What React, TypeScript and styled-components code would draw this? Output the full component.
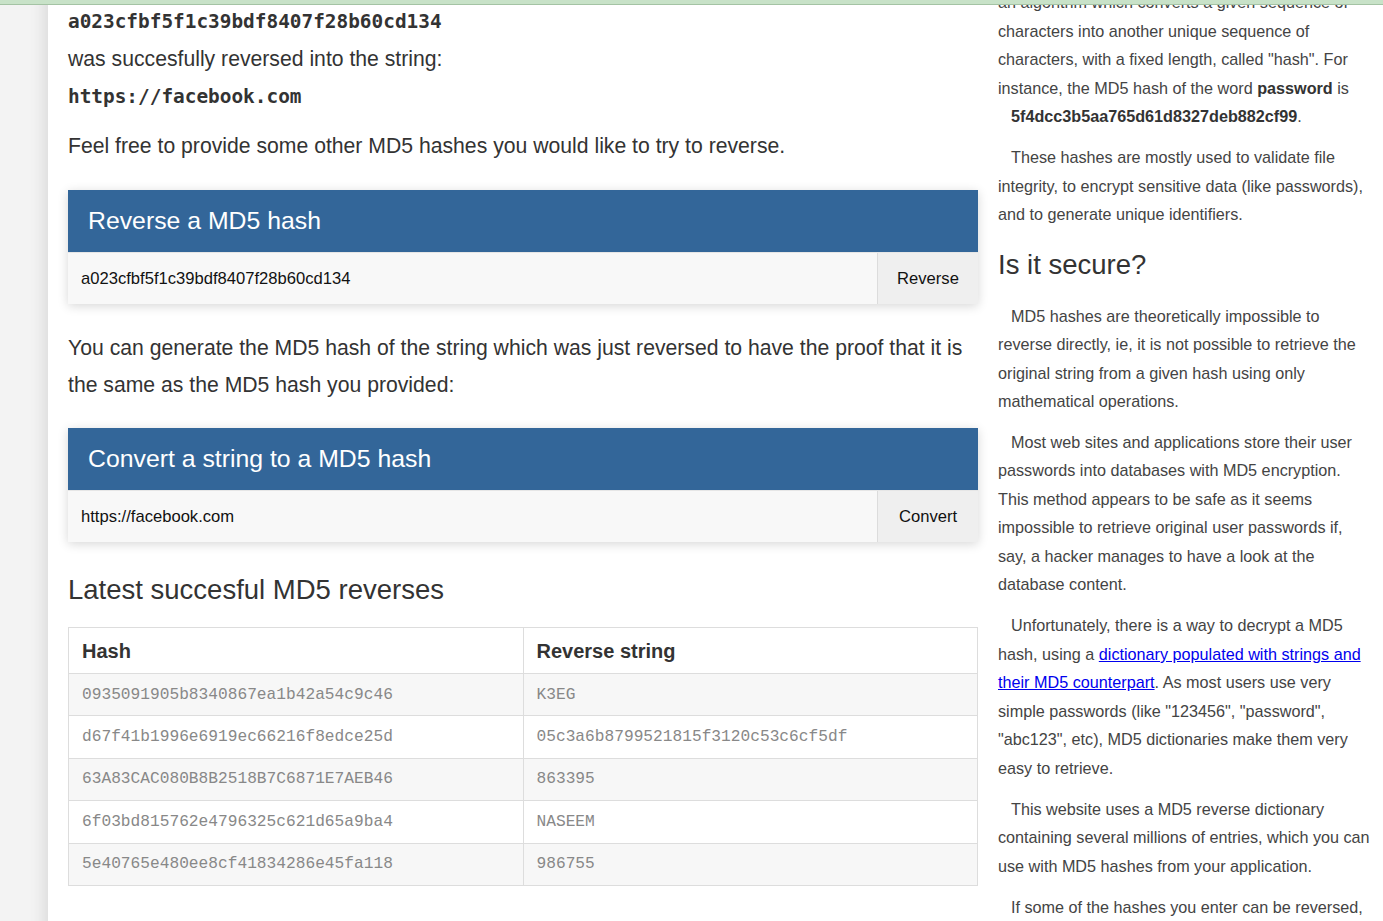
import React from "react";
import styled, { createGlobalStyle } from "styled-components";

const GlobalStyle = createGlobalStyle`
  html, body {
    margin: 0;
    padding: 0;
    background: #f3f3f3;
    overflow-x: hidden;
  }
  body {
    font-family: "Liberation Sans", Arial, sans-serif;
    color: #333;
  }
  * { box-sizing: border-box; }
`;

const TopBar = styled.div`
  position: fixed;
  top: 0;
  left: 0;
  right: 0;
  height: 5px;
  background: #c8e2c8;
  border-bottom: 1px solid #a4c3a4;
  z-index: 10;
`;

const Page = styled.div`
  display: flex;
  margin-top: -40.3px;
  min-height: calc(100vh + 40.3px);
`;

const Gutter = styled.div`
  width: 48px;
  flex: none;
  background: #f3f3f3;
`;

const Main = styled.main`
  flex: 1;
  background: #fff;
  box-shadow: -4px 0 14px rgba(0, 0, 0, 0.1);
  padding: 0 10px 40px 20px;
`;

const Columns = styled.div`
  display: grid;
  grid-template-columns: 910px 1fr;
  column-gap: 20px;
  align-items: start;
`;

const LeftCol = styled.div`
  padding-top: 5.05px;
  display: flex;
  flex-direction: column;
`;

const Lead = styled.p<{ $mt?: number; $lh?: number }>`
  margin: ${(p) => p.$mt ?? 0}px 0 0;
  font-size: 21.2px;
  line-height: ${(p) => p.$lh ?? 37.5}px;
  color: #333;
`;

const HashCode = styled.code`
  font-family: "DejaVu Sans Mono", "Liberation Mono", monospace;
  font-weight: bold;
  font-size: 19.4px;
  line-height: 1;
  color: #333;
`;

const Panel = styled.section<{ $mt: number }>`
  margin-top: ${(p) => p.$mt}px;
  background: #fff;
  box-shadow: 0 2px 10px rgba(0, 0, 0, 0.16);
`;

const PanelHead = styled.h2`
  margin: 0;
  height: 62px;
  display: flex;
  align-items: center;
  padding-left: 20px;
  background: #336699;
  color: #fff;
  font-weight: normal;
  font-size: 24.8px;
`;

const InputRow = styled.div`
  display: flex;
  height: 52px;
  border-top: 1px solid #e6e6e6;
  background: #f8f8f8;
`;

const Field = styled.div`
  flex: 1;
  display: flex;
  align-items: center;
  padding-left: 13px;
  font-size: 16.6px;
  color: #111;
`;

const Btn = styled.button`
  width: 101px;
  border: 0;
  border-left: 1px solid #dcdcdc;
  background: #efefef;
  font-family: "Liberation Sans", Arial, sans-serif;
  font-size: 16.6px;
  color: #111;
  padding: 0;
  cursor: pointer;
`;

const SectionTitle = styled.h3`
  margin: 31.5px 0 0;
  font-weight: normal;
  font-size: 27.5px;
  line-height: 31px;
  color: #333;
`;

const Table = styled.table`
  margin-top: 22.5px;
  width: 100%;
  border-collapse: collapse;
  table-layout: fixed;
  border: 1px solid #dddddd;
`;

const Th = styled.th`
  height: 46px;
  text-align: left;
  padding: 2px 13px 0;
  font-size: 20px;
  font-weight: bold;
  color: #333;
  border: 1px solid #dddddd;
  background: #fff;
`;

const Tr = styled.tr<{ $striped: boolean }>`
  background: ${(p) => (p.$striped ? "#f7f7f7" : "#fff")};
`;

const Td = styled.td`
  height: 42.4px;
  padding: 0 13px;
  font-family: "Liberation Mono", "Courier New", monospace;
  font-size: 16.2px;
  color: #888;
  border: 1px solid #dddddd;
  white-space: nowrap;
`;

const RightCol = styled.aside`
  display: flex;
  flex-direction: column;
`;

const Para = styled.p<{ $mt?: number }>`
  margin: ${(p) => p.$mt ?? 12.4}px 0 0;
  font-size: 16.2px;
  line-height: 28.5px;
  color: #444;
  text-indent: 13px;
`;

const BoldHash = styled.strong`
  display: inline-block;
  margin-left: 13px;
  text-indent: 0;
  color: #333;
`;

const Strong = styled.strong`
  color: #333;
`;

const SideTitle = styled.h3`
  margin: 20px 0 0;
  font-weight: normal;
  font-size: 27.5px;
  line-height: 31px;
  color: #333;
`;

const Link = styled.a`
  color: #0000ee;
  text-decoration: underline;
`;

const rows: [string, string][] = [
  ["0935091905b8340867ea1b42a54c9c46", "K3EG"],
  ["d67f41b1996e6919ec66216f8edce25d", "05c3a6b8799521815f3120c53c6cf5df"],
  ["63A83CAC080B8B2518B7C6871E7AEB46", "863395"],
  ["6f03bd815762e4796325c621d65a9ba4", "NASEEM"],
  ["5e40765e480ee8cf41834286e45fa118", "986755"],
];

export default function App() {
  return (
    <>
      <GlobalStyle />
      <TopBar />
      <Page>
        <Gutter />
        <Main>
          <Columns>
            <LeftCol>
              <Lead>
                The MD5 hash:
                <br />
                <HashCode>a023cfbf5f1c39bdf8407f28b60cd134</HashCode>
                <br />
                was succesfully reversed into the string:
                <br />
                <HashCode>https://facebook.com</HashCode>
              </Lead>
              <Lead $mt={12.5}>
                Feel free to provide some other MD5 hashes you would like to try to reverse.
              </Lead>
              <Panel $mt={25.25}>
                <PanelHead>Reverse a MD5 hash</PanelHead>
                <InputRow>
                  <Field>a023cfbf5f1c39bdf8407f28b60cd134</Field>
                  <Btn type="button">Reverse</Btn>
                </InputRow>
              </Panel>
              <Lead $mt={25.25} $lh={37}>
                You can generate the MD5 hash of the string which was just reversed to have the proof that it is
                the same as the MD5 hash you provided:
              </Lead>
              <Panel $mt={24.75}>
                <PanelHead>Convert a string to a MD5 hash</PanelHead>
                <InputRow>
                  <Field>https://facebook.com</Field>
                  <Btn type="button">Convert</Btn>
                </InputRow>
              </Panel>
              <SectionTitle>Latest succesful MD5 reverses</SectionTitle>
              <Table>
                <thead>
                  <tr>
                    <Th>Hash</Th>
                    <Th>Reverse string</Th>
                  </tr>
                </thead>
                <tbody>
                  {rows.map(([h, s], i) => (
                    <Tr key={h} $striped={i % 2 === 0}>
                      <Td>{h}</Td>
                      <Td>{s}</Td>
                    </Tr>
                  ))}
                </tbody>
              </Table>
            </LeftCol>
            <RightCol>
              <Para $mt={0}>
                MD5 is a message digest algorithm, ie,
                <br />
                an algorithm which converts a given sequence of characters into another unique sequence of
                characters, with a fixed length, called "hash". For instance, the MD5 hash of the word{" "}
                <Strong>password</Strong> is <BoldHash>5f4dcc3b5aa765d61d8327deb882cf99</BoldHash>.
              </Para>
              <Para>
                These hashes are mostly used to validate file integrity, to encrypt sensitive data (like
                passwords), and to generate unique identifiers.
              </Para>
              <SideTitle>Is it secure?</SideTitle>
              <Para $mt={22}>
                MD5 hashes are theoretically impossible to reverse directly, ie, it is not possible to retrieve
                the original string from a given hash using only mathematical operations.
              </Para>
              <Para>
                Most web sites and applications store their user passwords into databases with MD5 encryption.
                This method appears to be safe as it seems impossible to retrieve original user passwords if,
                say, a hacker manages to have a look at the database content.
              </Para>
              <Para>
                Unfortunately, there is a way to decrypt a MD5 hash, using a{" "}
                <Link href="#">dictionary populated with strings and their MD5 counterpart</Link>. As most users
                use very simple passwords (like "123456", "password", "abc123", etc), MD5 dictionaries make them
                very easy to retrieve.
              </Para>
              <Para>
                This website uses a MD5 reverse dictionary containing several millions of entries, which you can
                use with MD5 hashes from your application.
              </Para>
              <Para>
                If some of the hashes you enter can be reversed, they will be added to the list of latest
                succesful reverses.
              </Para>
            </RightCol>
          </Columns>
        </Main>
      </Page>
    </>
  );
}
